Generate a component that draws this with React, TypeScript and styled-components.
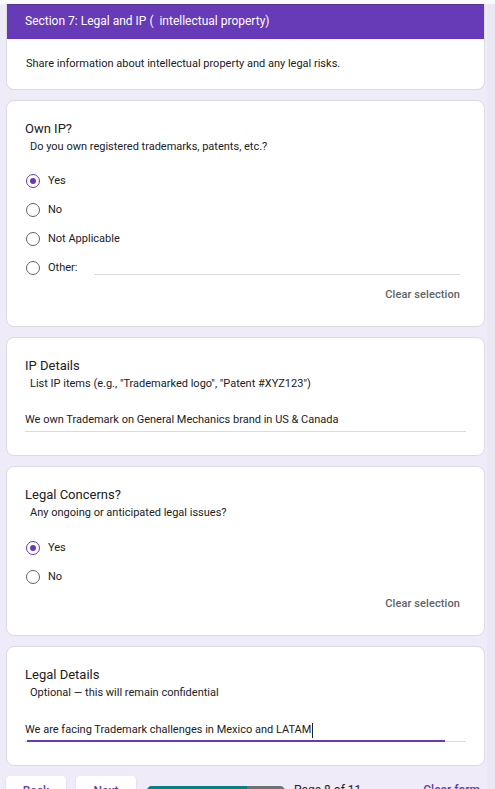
import React from 'react';
import styled, { createGlobalStyle } from 'styled-components';

const GlobalStyle = createGlobalStyle`
  html, body {
    margin: 0;
    padding: 0;
    background: #f0ebf8;
    font-family: Roboto, 'Liberation Sans', Arial, sans-serif;
    color: #202124;
  }
`;

type Option = { label: string; checked?: boolean; other?: boolean };

const ownIpOptions: Option[] = [
  { label: 'Yes', checked: true },
  { label: 'No' },
  { label: 'Not Applicable' },
  { label: 'Other:', other: true },
];

const legalOptions: Option[] = [{ label: 'Yes', checked: true }, { label: 'No' }];

const App = () => {
  return (
    <>
      <GlobalStyle />
      <Page>
        <Column>
          <HeaderCard>
            <HeaderBar>Section 7: Legal and IP (&nbsp; intellectual property)</HeaderBar>
            <HeaderBody>Share information about intellectual property and any legal risks.</HeaderBody>
          </HeaderCard>

          <Card>
            <Title>Own IP?</Title>
            <Help>Do you own registered trademarks, patents, etc.?</Help>
            <Options>
              {ownIpOptions.map((o) => (
                <OptionRow key={o.label}>
                  <Radio $checked={o.checked} />
                  <OptionLabel>{o.label}</OptionLabel>
                  {o.other && <OtherLine />}
                </OptionRow>
              ))}
            </Options>
            <ClearRow>
              <ClearButton>Clear selection</ClearButton>
            </ClearRow>
          </Card>

          <Card>
            <Title>IP Details</Title>
            <Help>List IP items (e.g., "Trademarked logo", "Patent #XYZ123")</Help>
            <Answer>
              <AnswerText>We own Trademark on General Mechanics brand in US &amp; Canada</AnswerText>
            </Answer>
          </Card>

          <Card>
            <Title>Legal Concerns?</Title>
            <Help>Any ongoing or anticipated legal issues?</Help>
            <Options $top={12}>
              {legalOptions.map((o) => (
                <OptionRow key={o.label}>
                  <Radio $checked={o.checked} />
                  <OptionLabel>{o.label}</OptionLabel>
                </OptionRow>
              ))}
            </Options>
            <ClearRow>
              <ClearButton>Clear selection</ClearButton>
            </ClearRow>
          </Card>

          <Card>
            <Title>Legal Details</Title>
            <Help>Optional — this will remain confidential</Help>
            <Answer $focused>
              <AnswerText>
                We are facing Trademark challenges in Mexico and LATAM
                <Caret />
              </AnswerText>
              <FocusBar />
            </Answer>
          </Card>

          <Footer>
            <NavButton>Back</NavButton>
            <NavButton>Next</NavButton>
            <Progress>
              <ProgressFill style={{ width: `${(8 / 11) * 100}%` }} />
            </Progress>
            <PageCount>Page 8 of 11</PageCount>
            <ClearForm>Clear form</ClearForm>
          </Footer>
        </Column>
        <ScrollTrack />
      </Page>
    </>
  );
};

export default App;

// styled
const Page = styled.div`
  display: flex;
  height: 789px;
  overflow: hidden;
  padding-top: 4px;
  box-sizing: border-box;
  background: linear-gradient(#fafafc 0, #fafafc 4px, #f0ebf8 4px);
`;

const Column = styled.div`
  display: flex;
  flex-direction: column;
  gap: 10px;
  width: 479px;
  margin-left: 6px;
  & > * {
    flex-shrink: 0;
  }
`;

const ScrollTrack = styled.div`
  flex: 1;
  margin-left: 2px;
  background: #ebe8f3;
`;

const Card = styled.div`
  background: #fff;
  border: 1px solid #dadce0;
  border-radius: 8px;
  padding: 19px 18px 23px 18px;
  display: flex;
  flex-direction: column;
`;

const HeaderCard = styled.div`
  background: #fff;
  border: 1px solid #dadce0;
  border-top: none;
  border-radius: 0 0 8px 8px;
  overflow: hidden;
`;

const HeaderBar = styled.div`
  background: #673ab7;
  box-shadow: inset 0 1px 0 #5a32a3;
  color: #fff;
  font-size: 12px;
  height: 35px;
  line-height: 35px;
  padding-left: 18px;
`;

const HeaderBody = styled.div`
  font-size: 11px;
  line-height: 16px;
  padding: 17px 18px 17px 19px;
`;

const Title = styled.div`
  font-size: 13px;
  line-height: 18px;
`;

const Help = styled.div`
  font-size: 11px;
  line-height: 16px;
  margin-top: 1px;
  padding-left: 5px;
`;

const Options = styled.div<{ $top?: number }>`
  display: flex;
  flex-direction: column;
  margin-top: ${(p) => p.$top ?? 11}px;
`;

const OptionRow = styled.div`
  display: flex;
  align-items: center;
  height: 29px;
`;

const Radio = styled.span<{ $checked?: boolean }>`
  width: 14px;
  height: 14px;
  box-sizing: border-box;
  border-radius: 50%;
  border: 1.5px solid ${(p) => (p.$checked ? '#673ab7' : '#5f6368')};
  display: flex;
  align-items: center;
  justify-content: center;
  margin-left: 1px;
  &::after {
    content: '';
    width: 6px;
    height: 6px;
    border-radius: 50%;
    background: ${(p) => (p.$checked ? '#673ab7' : 'transparent')};
  }
`;

const OptionLabel = styled.span`
  font-size: 11px;
  margin-left: 8px;
`;

const OtherLine = styled.span`
  flex: 1;
  align-self: flex-end;
  margin: 0 6px 7px 17px;
  border-bottom: 1px solid #dadce0;
`;

const ClearRow = styled.div`
  display: flex;
  justify-content: flex-end;
  margin-top: 5px;
  padding-right: 6px;
`;

const ClearButton = styled.span`
  font-size: 11px;
  line-height: 16px;
  font-weight: 500;
  color: #5f6368;
  letter-spacing: 0.1px;
`;

const Answer = styled.div<{ $focused?: boolean }>`
  position: relative;
  margin-top: ${(p) => (p.$focused ? 21 : 20)}px;
  border-bottom: 1px solid #dadce0;
  padding-bottom: 3px;
`;

const AnswerText = styled.div`
  font-size: 11px;
  line-height: 16px;
  display: flex;
  align-items: center;
`;

const Caret = styled.span`
  width: 1px;
  height: 15px;
  background: #202124;
  margin-left: 1px;
`;

const FocusBar = styled.span`
  position: absolute;
  left: 2px;
  right: 21px;
  bottom: -1px;
  height: 2px;
  background: #673ab7;
`;

const Footer = styled.div`
  display: flex;
  align-items: flex-start;
  padding-top: 0;
`;

const NavButton = styled.button`
  width: 60px;
  height: 30px;
  border: none;
  border-radius: 4px;
  background: #fff;
  box-shadow: 0 1px 2px rgba(60, 64, 67, 0.2);
  color: #673ab7;
  font-family: inherit;
  font-size: 12px;
  font-weight: 500;
  margin-right: 10px;
  padding: 0;
  &:hover {
    cursor: pointer;
  }
`;

const Progress = styled.div`
  width: 138px;
  height: 10px;
  margin: 10px 0 0 1px;
  border-radius: 5px;
  background: #6f7173;
  overflow: hidden;
`;

const ProgressFill = styled.div`
  height: 100%;
  background: #00838a;
`;

const PageCount = styled.span`
  font-size: 12px;
  margin: 7px 0 0 9px;
`;

const ClearForm = styled.span`
  font-size: 12px;
  font-weight: 500;
  color: #673ab7;
  margin: 7px 0 0 auto;
  padding-right: 5px;
`;
